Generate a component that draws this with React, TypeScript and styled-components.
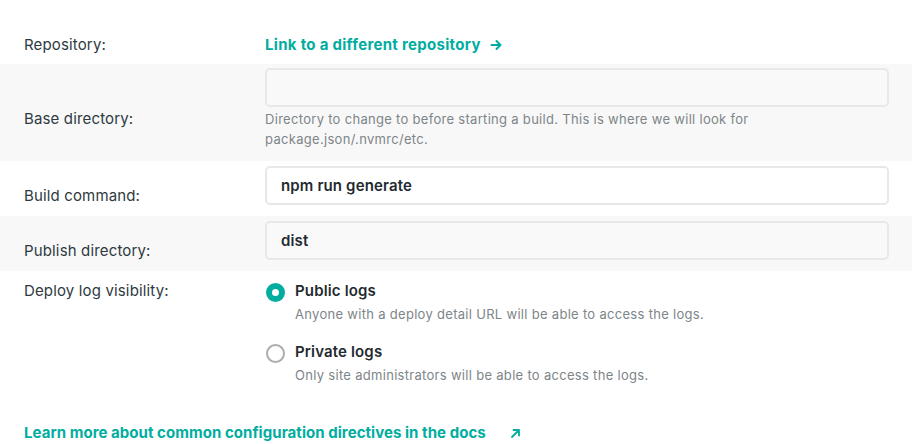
import styled, { createGlobalStyle } from "styled-components";

const GlobalStyle = createGlobalStyle`
    html, body {
        margin: 0;
        padding: 0;
        background: #ffffff;
    }
    body {
        font-family: Inter, "Noto Sans", "Liberation Sans", sans-serif;
        color: #2e3a40;
        -webkit-font-smoothing: antialiased;
    }
`;

const colors = {
    teal: "#00ad9f",
    label: "#2e3a40",
    value: "#1f2a30",
    muted: "#7d8589",
    stripe: "#f8f8f8",
    border: "#e8e8e8",
};

type RowProps = { $shaded?: boolean; $top?: number; $bottom?: number };

const Row = styled.div<RowProps>`
    display: grid;
    grid-template-columns: 241px 1fr;
    padding: ${(p) => p.$top ?? 5}px 23px ${(p) => p.$bottom ?? 10}px 24px;
    background-color: ${(p) => (p.$shaded ? colors.stripe : "transparent")};
`;

const Label = styled.div<{ $offset?: number }>`
    align-self: ${(p) => (p.$offset === undefined ? "start" : "center")};
    padding-top: ${(p) => p.$offset ?? 0}px;
    font-size: 15px;
    line-height: 20px;
    letter-spacing: 0.15px;
    color: ${colors.label};
`;

const Field = styled.div`
    display: flex;
    flex-direction: column;
`;

const Input = styled.div<{ $shaded?: boolean }>`
    box-sizing: border-box;
    height: 39px;
    padding: 0 14px;
    display: flex;
    align-items: center;
    border: 2px solid ${colors.border};
    border-radius: 5px;
    background-color: ${(p) => (p.$shaded ? "#f9f9f9" : "#ffffff")};
    font-size: 15px;
    font-weight: 600;
    letter-spacing: 0.15px;
    color: ${colors.value};
`;

const Help = styled.p`
    margin: 2px 0 0;
    max-width: 520px;
    font-size: 13px;
    line-height: 20px;
    letter-spacing: 0.3px;
    color: ${colors.muted};
`;

const LinkCell = styled.div`
    display: flex;
    align-items: center;
    height: 20px;
`;

const TealLink = styled.a<{ $spacing?: number; $gap?: number }>`
    display: inline-flex;
    align-items: center;
    gap: ${(p) => p.$gap ?? 9}px;
    height: 20px;
    font-size: 15px;
    line-height: 20px;
    font-weight: 700;
    letter-spacing: ${(p) => p.$spacing ?? 0}px;
    color: ${colors.teal};
    text-decoration: none;
    cursor: pointer;

    svg {
        flex: none;
    }
`;

const Options = styled.div`
    display: flex;
    flex-direction: column;
    gap: 18px;
`;

const Option = styled.label`
    display: flex;
    align-items: flex-start;
    gap: 10px;
    cursor: pointer;
`;

const Radio = styled.span<{ $checked?: boolean }>`
    box-sizing: border-box;
    flex: none;
    width: 19px;
    height: 19px;
    margin: 2px 0 0 1px;
    border-radius: 50%;
    border: ${(p) => (p.$checked ? `6px solid ${colors.teal}` : "2px solid #a9adb0")};
    background-color: #ffffff;
`;

const OptionText = styled.div`
    display: flex;
    flex-direction: column;
    gap: 3px;
`;

const OptionTitle = styled.span`
    font-size: 15px;
    line-height: 20px;
    font-weight: 600;
    letter-spacing: 0.15px;
    color: ${colors.value};
`;

const OptionHelp = styled.span`
    font-size: 13px;
    line-height: 20px;
    letter-spacing: 0.3px;
    color: ${colors.muted};
`;

const Footer = styled.div`
    display: flex;
    padding: 38px 24px 0;
`;

function ArrowRight() {
    return (
        <svg width="12" height="12" viewBox="0 0 12 12" fill="none" stroke="currentColor" strokeWidth="2" strokeLinecap="round" strokeLinejoin="round">
            <path d="M1.5 6h9M6.5 2l4 4-4 4" />
        </svg>
    );
}

function ArrowUpRight() {
    return (
        <svg width="11" height="11" viewBox="0 0 11 11" fill="none" stroke="currentColor" strokeWidth="1.8" strokeLinecap="round" strokeLinejoin="round">
            <path d="M2 9L9 2M3.5 2H9v5.5" />
        </svg>
    );
}

export default function App() {
    return (
        <>
            <GlobalStyle />
            <Row $top={35} $bottom={9}>
                <Label>Repository:</Label>
                <LinkCell>
                    <TealLink $spacing={0.3}>Link to a different repository <ArrowRight /></TealLink>
                </LinkCell>
            </Row>
            <Row $shaded $top={4} $bottom={12}>
                <Label $offset={20}>Base directory:</Label>
                <Field>
                    <Input $shaded />
                    <Help>
                        Directory to change to before starting a build. This is where we will look for
                        package.json/.nvmrc/etc.
                    </Help>
                </Field>
            </Row>
            <Row>
                <Label $offset={20}>Build command:</Label>
                <Input>npm run generate</Input>
            </Row>
            <Row $shaded>
                <Label $offset={20}>Publish directory:</Label>
                <Input $shaded>dist</Input>
            </Row>
            <Row $top={10} $bottom={0}>
                <Label>Deploy log visibility:</Label>
                <Options>
                    <Option>
                        <Radio $checked />
                        <OptionText>
                            <OptionTitle>Public logs</OptionTitle>
                            <OptionHelp>Anyone with a deploy detail URL will be able to access the logs.</OptionHelp>
                        </OptionText>
                    </Option>
                    <Option>
                        <Radio />
                        <OptionText>
                            <OptionTitle>Private logs</OptionTitle>
                            <OptionHelp>Only site administrators will be able to access the logs.</OptionHelp>
                        </OptionText>
                    </Option>
                </Options>
            </Row>
            <Footer>
                <TealLink $spacing={0.05} $gap={24}>
                    Learn more about common configuration directives in the docs <ArrowUpRight />
                </TealLink>
            </Footer>
        </>
    );
}
